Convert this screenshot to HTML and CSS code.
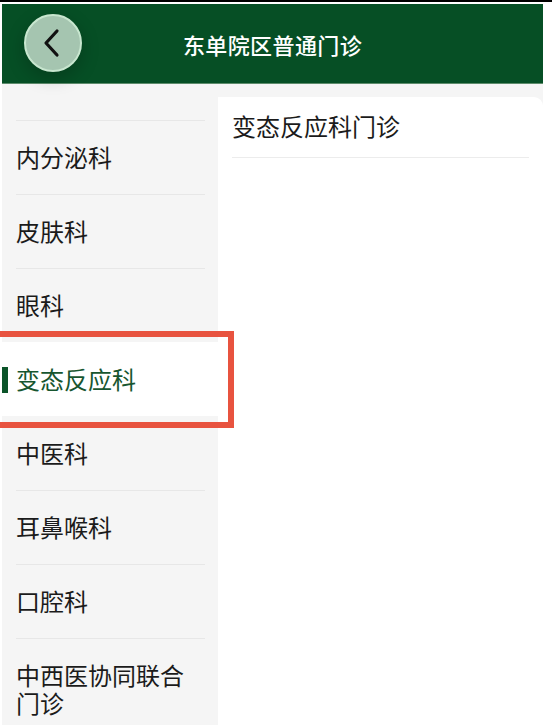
FILE: index.html
```html
<!DOCTYPE html>
<html lang="zh-CN">
<head>
<meta charset="utf-8">
<title>东单院区普通门诊</title>
<link rel="stylesheet" href="styles.css">
</head>
<body>
<div class="topbar"></div>
<div class="app">
  <header class="header">
    <div class="header-left">
      <button class="back" type="button" aria-label="返回">
        <svg width="54" height="54" viewBox="0 0 54 54">
          <path d="M31 15 L20 27 L31 39" fill="none" stroke="#111" stroke-width="3.2" stroke-linecap="round" stroke-linejoin="round"/>
        </svg>
      </button>
    </div>
    <h1 class="title">东单院区普通门诊</h1>
    <div class="header-right"></div>
  </header>
  <main class="main">
    <nav class="sidebar">
      <div class="spacer"></div>
      <div class="item"><div class="cell">内分泌科</div></div>
      <div class="item"><div class="cell">皮肤科</div></div>
      <div class="item"><div class="cell">眼科</div></div>
      <div class="item active"><div class="cell">变态反应科</div></div>
      <div class="item after-active"><div class="cell">中医科</div></div>
      <div class="item"><div class="cell">耳鼻喉科</div></div>
      <div class="item"><div class="cell">口腔科</div></div>
      <div class="item"><div class="cell">中西医协同联合门诊</div></div>
    </nav>
    <section class="content">
      <div class="card">
        <div class="row">变态反应科门诊</div>
      </div>
    </section>
  </main>
</div>
<div class="annotation"></div>
</body>
</html>
```
FILE: styles.css
```css
html, body {
  margin: 0;
  padding: 0;
  background: #ffffff;
  height: 725px;
  overflow: hidden;
}
body {
  position: relative;
  font-family: "Noto Sans CJK SC", "Noto Sans", sans-serif;
  color: #1b1b1b;
}
.topbar {
  height: 2px;
  background: #000;
  margin-bottom: 2px;
}
.app {
  width: 541px;
  margin-left: 2px;
  display: flex;
  flex-direction: column;
  height: 721px;
}
.header {
  position: relative;
  z-index: 2;
  height: 79px;
  background: #064f25;
  border-bottom: 1px solid #5e8c6c;
  display: grid;
  grid-template-columns: 1fr auto 1fr;
  align-items: center;
}
.header-left {
  padding-left: 22px;
  display: flex;
  align-items: center;
}
.back {
  width: 58px;
  height: 58px;
  border-radius: 50%;
  background: #a5c5b0;
  border: 2px solid #c8e6cf;
  padding: 0;
  display: flex;
  align-items: center;
  justify-content: center;
  box-shadow: 0 6px 18px rgba(0, 0, 0, 0.22);
  margin-top: -2px;
}
.title {
  margin: 0;
  font-size: 22px;
  font-weight: 500;
  color: #ffffff;
  letter-spacing: 0.4px;
}
.main {
  flex: 1;
  display: flex;
  background: #f5f5f5;
  min-height: 0;
}
.sidebar {
  width: 216px;
  background: #f5f5f5;
  font-size: 24px;
  line-height: 28px;
}
.spacer {
  height: 36px;
}
.item {
  position: relative;
}
.cell {
  margin: 0 13px 0 14px;
  border-top: 1px solid #e7e7e7;
  padding: 22px 0 23px;
}
.item.active {
  background: #ffffff;
  color: #17562f;
}
.item.active .cell,
.item.after-active .cell {
  border-top-color: transparent;
}
.item.active::before {
  content: "";
  position: absolute;
  left: 0;
  top: 25px;
  width: 6px;
  height: 26px;
  background: #0b5429;
}
.content {
  flex: 1;
  padding-top: 13px;
  display: flex;
}
.card {
  flex: 1;
  background: #ffffff;
  border-radius: 0 9px 0 0;
}
.row {
  margin: 0 14px;
  padding: 15px 0 17px;
  font-size: 24px;
  line-height: 28px;
  border-bottom: 1px solid #ececec;
}
.annotation {
  position: absolute;
  left: -10px;
  top: 331px;
  width: 232px;
  height: 85px;
  border: 6px solid #e8533f;
}
```
